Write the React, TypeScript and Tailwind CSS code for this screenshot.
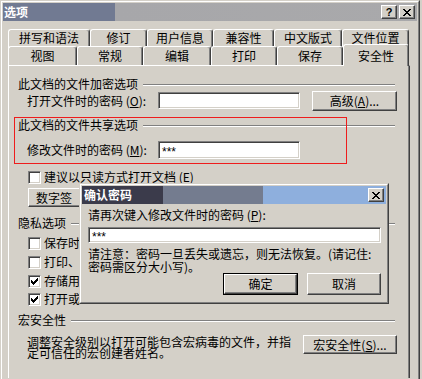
import type { ReactNode } from 'react';

const raised =
  'border border-t-white border-l-white border-r-[#404040] border-b-[#404040] shadow-[inset_-1px_-1px_0_#808080]';
const sunken =
  'border border-t-[#808080] border-l-[#808080] border-r-white border-b-white shadow-[inset_1px_1px_0_#404040,inset_-1px_-1px_0_#d4d0c8] bg-white';

function Btn({ children, className = '', isDefault = false }: { children: ReactNode; className?: string; isDefault?: boolean }) {
  if (isDefault) {
    return (
      <div className={`border border-black ${className}`}>
        <div className={`${raised} h-full flex items-center justify-center leading-[12px]`}>{children}</div>
      </div>
    );
  }
  return <div className={`${raised} flex items-center justify-center leading-[12px] ${className}`}>{children}</div>;
}

function GroupHeader({ title, className = '' }: { title: string; className?: string }) {
  return (
    <div className={`flex items-center h-[12px] pl-[9px] pr-[14px] ${className}`}>
      <span className="leading-[12px] whitespace-nowrap">{title}</span>
      <div className="flex-1 ml-[5px] mt-[2px] border-t border-t-[#808080] border-b border-b-white" />
    </div>
  );
}

function Check({ checked = false }: { checked?: boolean }) {
  return (
    <div className={`w-[13px] h-[13px] ${sunken} flex items-center justify-center shrink-0`}>
      {checked && (
        <svg width="7" height="7" viewBox="0 0 7 7" shapeRendering="crispEdges">
          <path d="M0 2h1v1h1v1h1v-1h1v-1h1v-1h1v-1h1v3h-1v1h-1v1h-1v1h-1v1h-1v-1h-1v-1h-1z" fill="#000" />
        </svg>
      )}
    </div>
  );
}

function CheckRow({ label, checked = false, className = '' }: { label: ReactNode; checked?: boolean; className?: string }) {
  return (
    <div className={`flex items-center h-[16px] pl-[19px] ${className}`}>
      <Check checked={checked} />
      <span className="ml-[3px] leading-[12px] whitespace-nowrap">{label}</span>
    </div>
  );
}

function CaptionBtn({ children }: { children: ReactNode }) {
  return <div className={`${raised} bg-[#d4d0c8] w-[16px] h-[14px] flex items-center justify-center`}>{children}</div>;
}

const CloseGlyph = () => (
  <svg width="8" height="7" viewBox="0 0 8 7" shapeRendering="crispEdges">
    <path d="M0 0h2v1h1v1h2v-1h1v-1h2v1h-1v1h-1v1h-1v1h1v1h1v1h1v1h-2v-1h-1v-1h-2v1h-1v1h-2v-1h1v-1h1v-1h1v-1h-1v-1h-1v-1h-1z" fill="#000" />
  </svg>
);

const row1 = [
  ['拼写和语法', 82],
  ['修订', 57],
  ['用户信息', 66],
  ['兼容性', 61],
  ['中文版式', 68],
  ['文件位置', 67],
] as const;

const row2 = [
  ['视图', 69],
  ['常规', 66],
  ['编辑', 68],
  ['打印', 66],
  ['保存', 66],
  ['安全性', 66],
] as const;

const tabCls =
  'border-t border-l border-r border-t-white border-l-white border-r-[#404040] shadow-[inset_-1px_0_0_#808080] rounded-t-[3px] bg-[#d4d0c8] flex items-center justify-center leading-[12px]';

export default function App() {
  return (
    <div className="w-[422px] h-[379px] bg-[#d4d0c8] relative overflow-hidden text-[12px] text-black font-['Noto_Sans_CJK_SC','Noto_Sans_CJK_JP',sans-serif]">
      <div className="w-[420px] h-[381px] border border-t-[#d4d0c8] border-l-[#d4d0c8] border-r-[#404040] border-b-[#404040]">
        <div className="h-full border border-t-white border-l-white border-r-[#808080] border-b-[#808080] p-[1px] flex flex-col">
          {/* title bar */}
          <div className="h-[18px] flex items-center bg-[linear-gradient(90deg,#717a92_0px,#717a92_112px,#a7a7aa_112px,#a9a9ab_100%)]">
            <span className="pl-[1px] text-white font-bold leading-[12px]">选项</span>
            <div className="ml-auto flex items-center mr-[2px]">
              <CaptionBtn>
                <span className="font-['Liberation_Sans',sans-serif] font-bold text-[11px] leading-[10px]">?</span>
              </CaptionBtn>
              <div className="ml-[2px]">
                <CaptionBtn>
                  <CloseGlyph />
                </CaptionBtn>
              </div>
            </div>
          </div>

          {/* tabs */}
          <div className="mt-[8px] ml-[5px] flex h-[17px]">
            {row1.map(([t, w]) => (
              <div key={t} className={`${tabCls} h-[19px]`} style={{ width: w }}>
                <span className="-mt-[3px]">{t}</span>
              </div>
            ))}
          </div>
          <div className="ml-[5px] flex h-[19px] items-end relative">
            {row2.map(([t, w]) =>
              t === '安全性' ? (
                <div key={t} className={`${tabCls} h-[22px] -mb-[1px] relative z-10`} style={{ width: w }}>
                  {t}
                </div>
              ) : (
                <div key={t} className={`${tabCls} h-[19px]`} style={{ width: w }}>
                  {t}
                </div>
              ),
            )}
          </div>

          {/* panel */}
          <div className="ml-[5px] w-[402px] flex-1 border-t border-l border-r border-t-white border-l-white border-r-[#404040] shadow-[inset_-1px_0_0_#808080] flex flex-col">
            <GroupHeader title="此文档的文件加密选项" className="mt-[12px]" />
            <div className="flex items-center h-[21px] pl-[18px]">
              <span className="w-[131px] leading-[12px] whitespace-nowrap">
                打开文件时的密码 (<span className="underline">O</span>):
              </span>
              <div className={`${sunken} w-[142px] h-[17px]`} />
              <Btn className="ml-[12px] w-[85px] h-[20px]">
                高级(<span className="underline">A</span>)...
              </Btn>
            </div>

            <GroupHeader title="此文档的文件共享选项" className="mt-[8px]" />
            <div className="flex items-center h-[20px] mt-[9px] pl-[18px]">
              <span className="w-[131px] leading-[12px] whitespace-nowrap">
                修改文件时的密码 (<span className="underline">M</span>):
              </span>
              <div className={`${sunken} w-[142px] h-[18px] flex items-center pl-[3px] font-['Liberation_Sans',sans-serif] text-[12px] leading-[12px]`}>
                <span className="mt-[3px]">***</span>
              </div>
            </div>

            <CheckRow
              className="mt-[9px]"
              label={
                <>
                  建议以只读方式打开文档 (<span className="underline">E</span>)
                </>
              }
            />
            <div className="pl-[19px] mt-[3px]">
              <Btn className="w-[70px] h-[19px] justify-start pl-[7px] overflow-hidden">数字签</Btn>
            </div>

            <GroupHeader title="隐私选项" className="mt-[10px]" />
            <CheckRow className="mt-[6px]" label="保存时" />
            <CheckRow className="mt-[3px]" label="打印、" />
            <CheckRow className="mt-[3px]" label="存储用" checked />
            <CheckRow className="mt-[2px]" label="打开或" checked />

            <GroupHeader title="宏安全性" className="mt-[7px]" />
            <div className="flex mt-[7px] pl-[18px]">
              <div className="w-[264px] leading-[11px] mt-[3px]">
                调整安全级别以打开可能包含宏病毒的文件，并指定可信任的宏创建者姓名。
              </div>
              <Btn className="ml-[12px] mt-[2px] w-[94px] h-[19px]">
                宏安全性(<span className="underline">S</span>)...
              </Btn>
            </div>
          </div>
        </div>
      </div>

      {/* red highlight annotation */}
      <div className="absolute left-[14px] top-[117px] w-[333px] h-[47px] border border-[#ee1c1c]" />

      {/* confirm password dialog */}
      <div className="absolute left-[79px] top-[183px] w-[310px] h-[121px] bg-[#d4d0c8] border border-t-[#d4d0c8] border-l-[#d4d0c8] border-r-[#404040] border-b-[#404040]">
        <div className="h-full border border-t-white border-l-white border-r-[#808080] border-b-[#808080] p-[1px] flex flex-col">
          <div className="h-[18px] flex items-center bg-[linear-gradient(90deg,#3b3b4b_0px,#3b3b4b_81px,#747c8f_81px,#747c8f_181px,#8eafdd_181px,#8eafdd_100%)]">
            <span className="pl-[2px] text-white font-bold leading-[12px]">确认密码</span>
            <div className="ml-auto mr-[2px]">
              <CaptionBtn>
                <CloseGlyph />
              </CaptionBtn>
            </div>
          </div>
          <div className="pl-[6px] pr-[6px] flex flex-col">
            <div className="mt-[5px] leading-[12px] h-[12px]">
              请再次键入修改文件时的密码 (<span className="underline">P</span>):
            </div>
            <div className={`${sunken} mt-[6px] w-[293px] h-[16px] flex items-center pl-[3px] font-['Liberation_Sans',sans-serif] text-[12px] leading-[12px]`}>
              <span className="mt-[3px]">***</span>
            </div>
            <div className="mt-[4px] w-[293px] leading-[13px]">
              请注意：密码一旦丢失或遗忘，则无法恢复。(请记住:密码需区分大小写)。
            </div>
            <div className="flex w-[293px] justify-end">
              <Btn isDefault className="w-[75px] h-[22px]">
                确定
              </Btn>
              <Btn className="ml-[9px] w-[74px] h-[22px]">取消</Btn>
            </div>
          </div>
        </div>
      </div>
    </div>
  );
}
